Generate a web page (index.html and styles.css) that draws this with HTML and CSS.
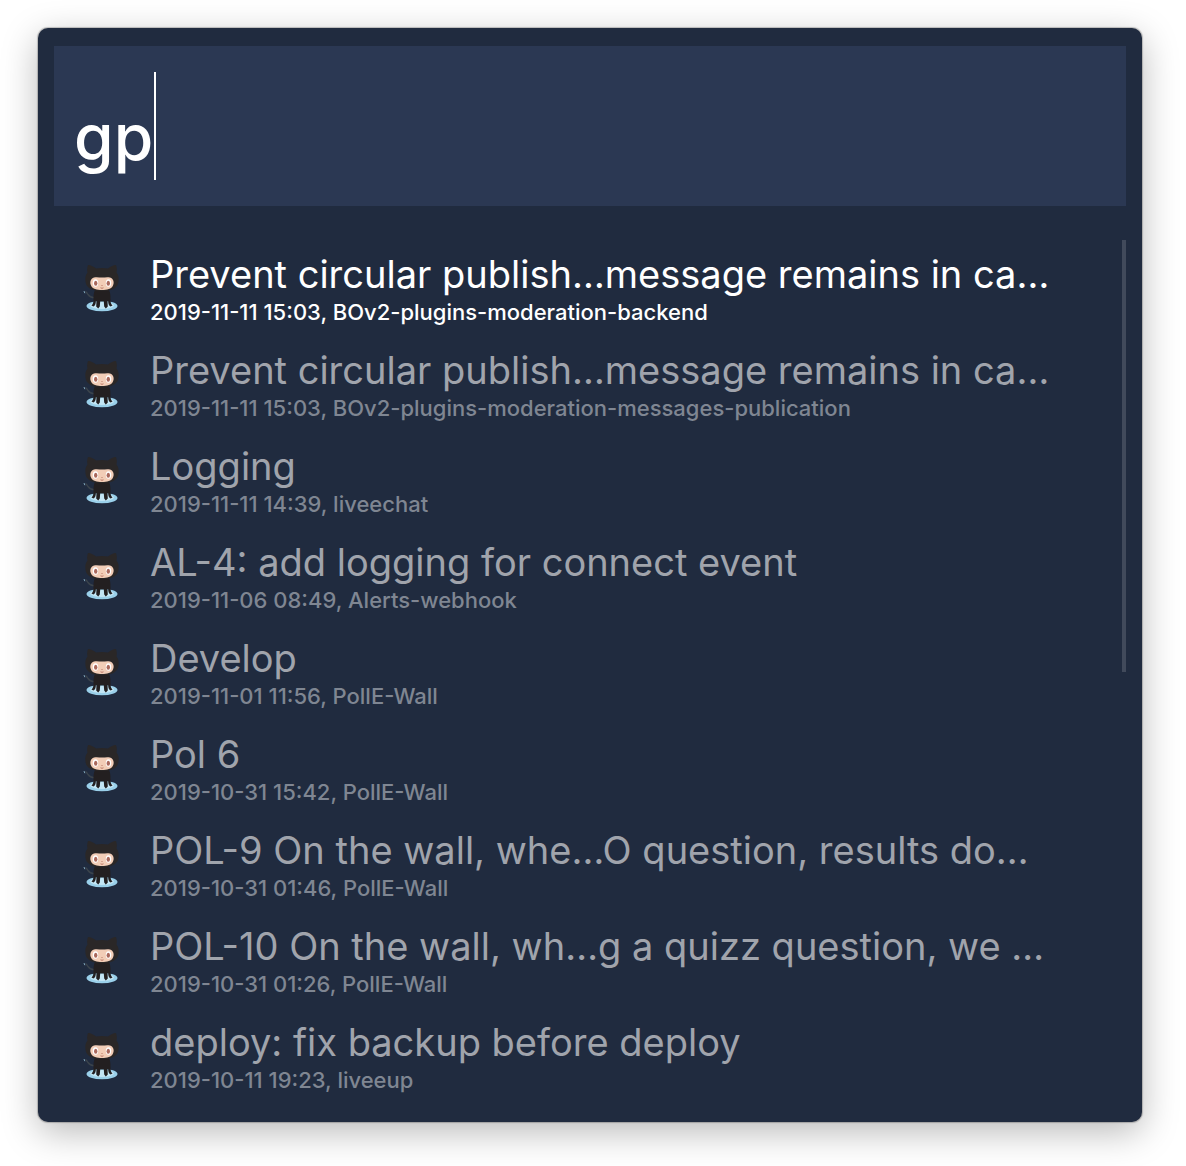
FILE: index.html
```html
<!DOCTYPE html>
<html lang="en">
<head>
<meta charset="utf-8">
<title>Launcher</title>
<link rel="stylesheet" href="styles.css">
</head>
<body>
<svg class="defs" aria-hidden="true">
  <symbol id="cat" viewBox="0 0 60 64">
    <ellipse cx="26" cy="50" rx="15.500" ry="5.300" fill="#9ad0ea"/>
    <ellipse cx="26" cy="49.500" rx="12" ry="3.500" fill="#c3e6f5"/>
    <path d="M20 41.500c-3 .5-6 0-8-3-.8-1.400-1.400-2-2.500-3" fill="none" stroke="#3b434c" stroke-width="1.400"/>
    <path d="M8 35l.8 2.200" stroke="#7fa3b8" stroke-width="1"/>
    <path d="M19 34h14c1.500 3 1.500 6 1.500 9 0 3 .2 5 2 6.500l-2 1c-2-1-2.300-3-2.300-5.500h-.7l.3 5.500-2 2-1.600-2-.4-5h-3.600l-.4 5-1.600 2-2-2 .3-5.500h-.7c0 2.500-.3 4.500-2.300 5.500l-2-1c1.800-1.500 2-3.500 2-6.500 0-3 0-6 1.500-9z" fill="#231f20"/>
    <path d="M12 9c3 0 6 2 8 3.500 4-.8 8-.8 12 0C34 11 37 9 40 9c1 3 1 5 .5 7.500 2 2.500 2.500 5 2 9C42 32 36 35 26 35S10 32 9.500 25.500c-.5-4 0-6.500 2-9C11 14 11 12 12 9z" fill="#2a2727"/>
    <path d="M18 21.500c3-.8 5 0 8 0s5-.8 8 0c3.500 1 4.500 5 3 8C35.500 33 31 34 26 34s-9.500-1-11-4.500c-1.500-3-.5-7 3-8z" fill="#f2cdb7"/>
    <ellipse cx="19.500" cy="27" rx="2.700" ry="3.700" fill="#fff"/>
    <ellipse cx="32.500" cy="27" rx="2.700" ry="3.700" fill="#fff"/>
    <ellipse cx="19.700" cy="27.200" rx="1.700" ry="2.500" fill="#a9685c"/>
    <ellipse cx="32.300" cy="27.200" rx="1.700" ry="2.500" fill="#a9685c"/>
    <path d="M25.500 29.500h1M24.500 31.800q1.500 1 3 0" fill="none" stroke="#b5705f" stroke-width=".9"/>
  </symbol>
</svg>
<main class="panel">
  <div class="search">
    <input class="query" type="text" value="gp" aria-label="Search" spellcheck="false" autocomplete="off">
    <span class="caret"></span>
  </div>
  <div class="results">
    <ul class="list" role="listbox" aria-label="Pull requests">
      <li class="item selected" role="option" aria-selected="true"><svg class="icon"><use href="#cat"/></svg><div class="text"><div class="title">Prevent circular publish…message remains in ca…</div><div class="meta">2019-11-11 15:03, BOv2-plugins-moderation-backend</div></div></li>
      <li class="item" role="option"><svg class="icon"><use href="#cat"/></svg><div class="text"><div class="title">Prevent circular publish…message remains in ca…</div><div class="meta">2019-11-11 15:03, BOv2-plugins-moderation-messages-publication</div></div></li>
      <li class="item" role="option"><svg class="icon"><use href="#cat"/></svg><div class="text"><div class="title">Logging</div><div class="meta">2019-11-11 14:39, liveechat</div></div></li>
      <li class="item" role="option"><svg class="icon"><use href="#cat"/></svg><div class="text"><div class="title">AL-4: add logging for connect event</div><div class="meta">2019-11-06 08:49, Alerts-webhook</div></div></li>
      <li class="item" role="option"><svg class="icon"><use href="#cat"/></svg><div class="text"><div class="title">Develop</div><div class="meta">2019-11-01 11:56, PollE-Wall</div></div></li>
      <li class="item" role="option"><svg class="icon"><use href="#cat"/></svg><div class="text"><div class="title">Pol 6</div><div class="meta">2019-10-31 15:42, PollE-Wall</div></div></li>
      <li class="item" role="option"><svg class="icon"><use href="#cat"/></svg><div class="text"><div class="title">POL-9 On the wall, whe…O question, results do…</div><div class="meta">2019-10-31 01:46, PollE-Wall</div></div></li>
      <li class="item" role="option"><svg class="icon"><use href="#cat"/></svg><div class="text"><div class="title">POL-10 On the wall, wh…g a quizz question, we …</div><div class="meta">2019-10-31 01:26, PollE-Wall</div></div></li>
      <li class="item" role="option"><svg class="icon"><use href="#cat"/></svg><div class="text"><div class="title">deploy: fix backup before deploy</div><div class="meta">2019-10-11 19:23, liveeup</div></div></li>
    </ul>
    <div class="track"><div class="thumb"></div></div>
  </div>
</main>
</body>
</html>
```

FILE: styles.css
```css
* {
  box-sizing: border-box;
}

body {
  margin: 0;
  padding: 28px 44px 44px 38px;
  background: #fff;
  font-family: Inter, "Liberation Sans", sans-serif;
}

.defs {
  position: absolute;
  width: 0;
  height: 0;
}

.panel {
  padding: 18px 16px;
  border-radius: 10px;
  background: #202b3f;
  box-shadow: 0 0 1px 1px rgba(0, 0, 0, 0.22), 0 10px 36px rgba(0, 0, 0, 0.28);
}

.search {
  position: relative;
}

.query {
  display: block;
  width: 100%;
  height: 160px;
  padding: 20px 20px 0;
  border: 0;
  outline: 0;
  background: #2b3853;
  color: #fff;
  font: 500 64px Inter, "Liberation Sans", sans-serif;
}

.caret {
  position: absolute;
  left: 100px;
  top: 26px;
  width: 2px;
  height: 108px;
  background: #fff;
}

.results {
  display: flex;
  margin-top: 34px;
}

.list {
  flex: 1;
  min-width: 0;
  margin: 0;
  padding: 0 0 0 22px;
  list-style: none;
}

.item {
  display: flex;
  align-items: center;
  gap: 14px;
  height: 96px;
  color: #a0a4ac;
}

.icon {
  flex: none;
  width: 60px;
  height: 64px;
}

.text {
  min-width: 0;
  white-space: nowrap;
}

.title {
  font-size: 38px;
  line-height: 48px;
}

.meta {
  color: #7f8692;
  font-size: 22px;
  font-weight: 500;
  line-height: 28px;
}

.selected,
.selected .meta {
  color: #fff;
}

.track {
  flex: none;
  width: 4px;
}

.thumb {
  height: 50%;
  background: #414a5b;
}
```
